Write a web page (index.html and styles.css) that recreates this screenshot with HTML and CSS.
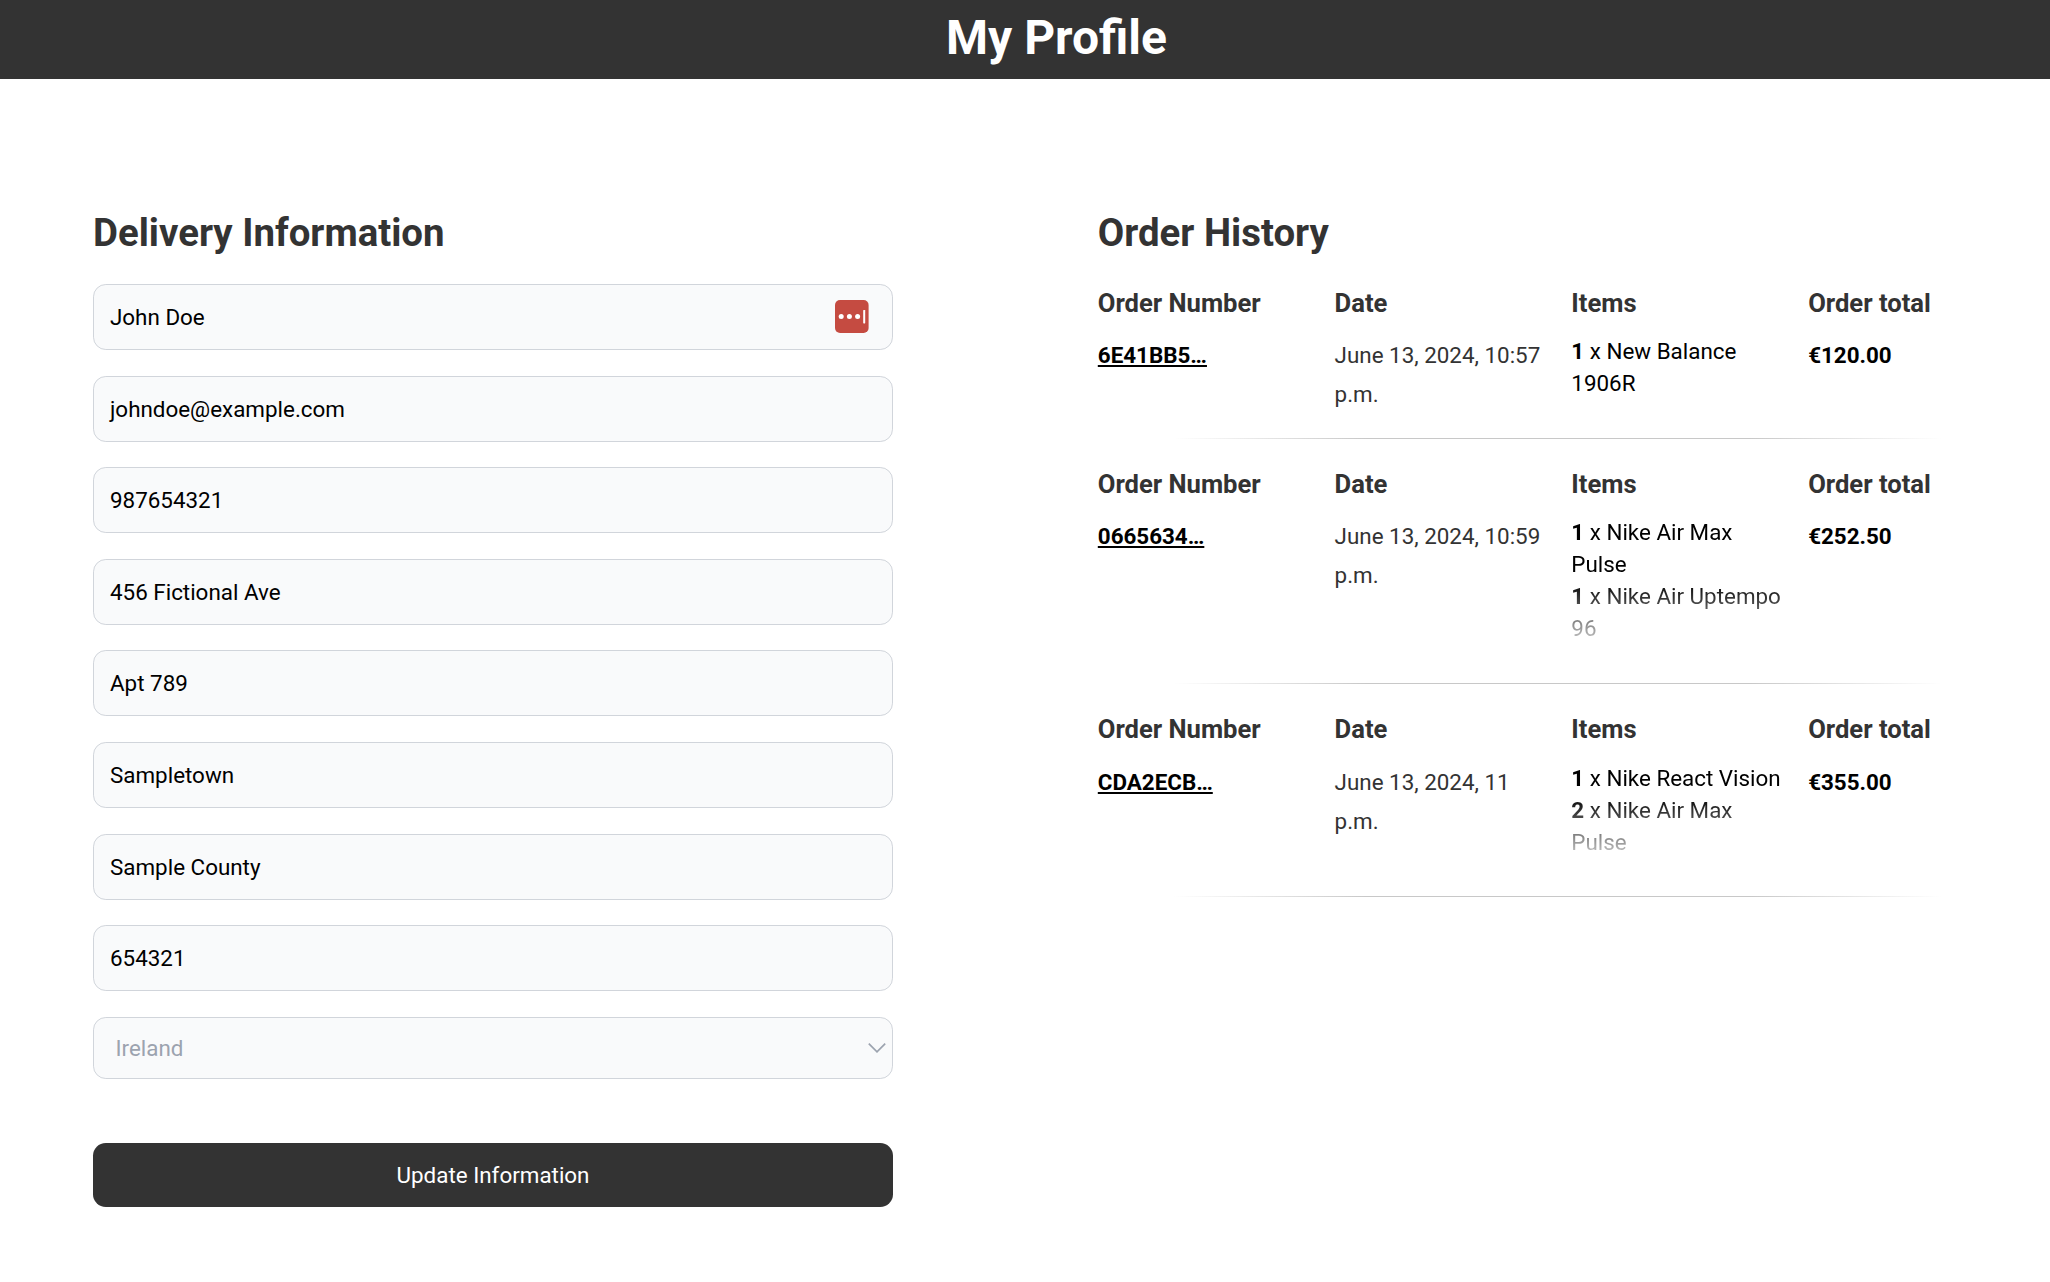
FILE: index.html
```
<!DOCTYPE html>
<html lang="en">
<head>
<meta charset="utf-8">
<title>My Profile</title>
<link rel="stylesheet" href="styles.css">
</head>
<body>
<header class="page-header"><h1>My Profile</h1></header>
<main class="profile">
  <section class="delivery">
    <h2>Delivery Information</h2>
    <form class="form">
      <div class="field">John Doe
        <svg class="autofill" width="34" height="34" viewBox="0 0 34 34"><rect width="33.6" height="33" rx="5" fill="#c54b41"/><g fill="#fff"><circle cx="6.2" cy="16.6" r="2.5"/><circle cx="14.4" cy="16.6" r="2.5"/><circle cx="22.6" cy="16.6" r="2.5"/><rect x="28.2" y="10" width="2" height="13.4" rx=".6"/></g></svg>
      </div>
      <div class="field">johndoe@example.com</div>
      <div class="field">987654321</div>
      <div class="field">456 Fictional Ave</div>
      <div class="field">Apt 789</div>
      <div class="field">Sampletown</div>
      <div class="field">Sample County</div>
      <div class="field">654321</div>
      <div class="field select">Ireland
        <svg class="chevron" width="18" height="12" viewBox="0 0 18 12" fill="none" stroke="#9ca3af" stroke-width="1.7"><path d="M.8 1.700 9 9.800l8.200-8.100"/></svg>
      </div>
      <button class="submit" type="button">Update Information</button>
    </form>
  </section>
  <section class="history">
    <h2>Order History</h2>
    <article class="order">
      <div><h3>Order Number</h3><p><a class="number">6E41BB5…</a></p></div>
      <div><h3>Date</h3><p>June 13, 2024, 10:57 p.m.</p></div>
      <div><h3>Items</h3><ul class="items"><li><b>1</b> x New Balance 1906R</li></ul></div>
      <div><h3>Order total</h3><p class="total">€120.00</p></div>
    </article>
    <hr class="divider">
    <article class="order order-tall">
      <div><h3>Order Number</h3><p><a class="number">0665634…</a></p></div>
      <div><h3>Date</h3><p>June 13, 2024, 10:59 p.m.</p></div>
      <div><h3>Items</h3><ul class="items faded"><li><b>1</b> x Nike Air Max Pulse</li><li><b>1</b> x Nike Air Uptempo 96</li></ul></div>
      <div><h3>Order total</h3><p class="total">€252.50</p></div>
    </article>
    <hr class="divider">
    <article class="order order-mid">
      <div><h3>Order Number</h3><p><a class="number">CDA2ECB…</a></p></div>
      <div><h3>Date</h3><p>June 13, 2024, 11 p.m.</p></div>
      <div><h3>Items</h3><ul class="items faded"><li><b>1</b> x Nike React Vision</li><li><b>2</b> x Nike Air Max Pulse</li></ul></div>
      <div><h3>Order total</h3><p class="total">€355.00</p></div>
    </article>
    <hr class="divider">
  </section>
</main>
</body>
</html>
```
FILE: styles.css
```
* { box-sizing: border-box; margin: 0; padding: 0; }
body {
  background: #fff;
  color: #000;
  font: 400 22.4px/32px Roboto, "Liberation Sans", sans-serif;
}
.page-header {
  height: 79px;
  padding: 9px 0 0 63px;
  background: #333;
  color: #fff;
  text-align: center;
}
h1 { font-size: 48px; line-height: 57.6px; font-weight: 700; }
h2 {
  height: 51px;
  margin-bottom: 26px;
  color: #333;
  font-size: 38.4px;
  line-height: 51px;
  font-weight: 700;
}
.profile {
  display: grid;
  grid-template-columns: 800px 922px;
  column-gap: 204.8px;
  padding: 128px 0 0 93px;
}
.form { display: flex; flex-direction: column; }
.field {
  display: flex;
  align-items: center;
  justify-content: space-between;
  height: 66px;
  margin-bottom: 25.6px;
  padding: 0 23px 0 16px;
  background: #f9fafb;
  border: 1px solid #d1d5db;
  border-radius: 12.8px;
}
.select {
  height: 62px;
  margin-bottom: 64px;
  padding: 0 6px 0 21.5px;
  color: #9ca3af;
}
.submit {
  height: 64px;
  border: 0;
  border-radius: 12.8px;
  background: #333;
  color: #fff;
  font: inherit;
}
.order {
  display: grid;
  grid-template-columns: repeat(4, 211.2px);
  column-gap: 25.6px;
  height: 154px;
}
.order-tall { height: 218px; }
.order-mid { height: 186px; }
h3 {
  margin-bottom: 12.8px;
  color: #333;
  font-size: 25.6px;
  line-height: 38.4px;
  font-weight: 700;
}
p { padding-top: 1px; color: #333; line-height: 38.8px; }
.order-mid h3 { margin-bottom: 13.8px; }
.order-mid p { line-height: 38.4px; }
.number {
  color: #000;
  font-weight: 700;
  text-decoration: underline;
}
.total { color: #000; font-weight: 700; }
.items { list-style: none; }
.items b { font-weight: 700; }
.faded {
  -webkit-mask-image: linear-gradient(#000 calc(100% - 62px), transparent calc(100% + 14px));
  mask-image: linear-gradient(#000 calc(100% - 62px), transparent calc(100% + 14px));
}
.divider {
  height: 1px;
  width: 768px;
  margin: 0 0 26px 76.5px;
  border: 0;
  background: linear-gradient(90deg, transparent, #c8c8c8 25%, #c8c8c8 75%, transparent);
}
```
